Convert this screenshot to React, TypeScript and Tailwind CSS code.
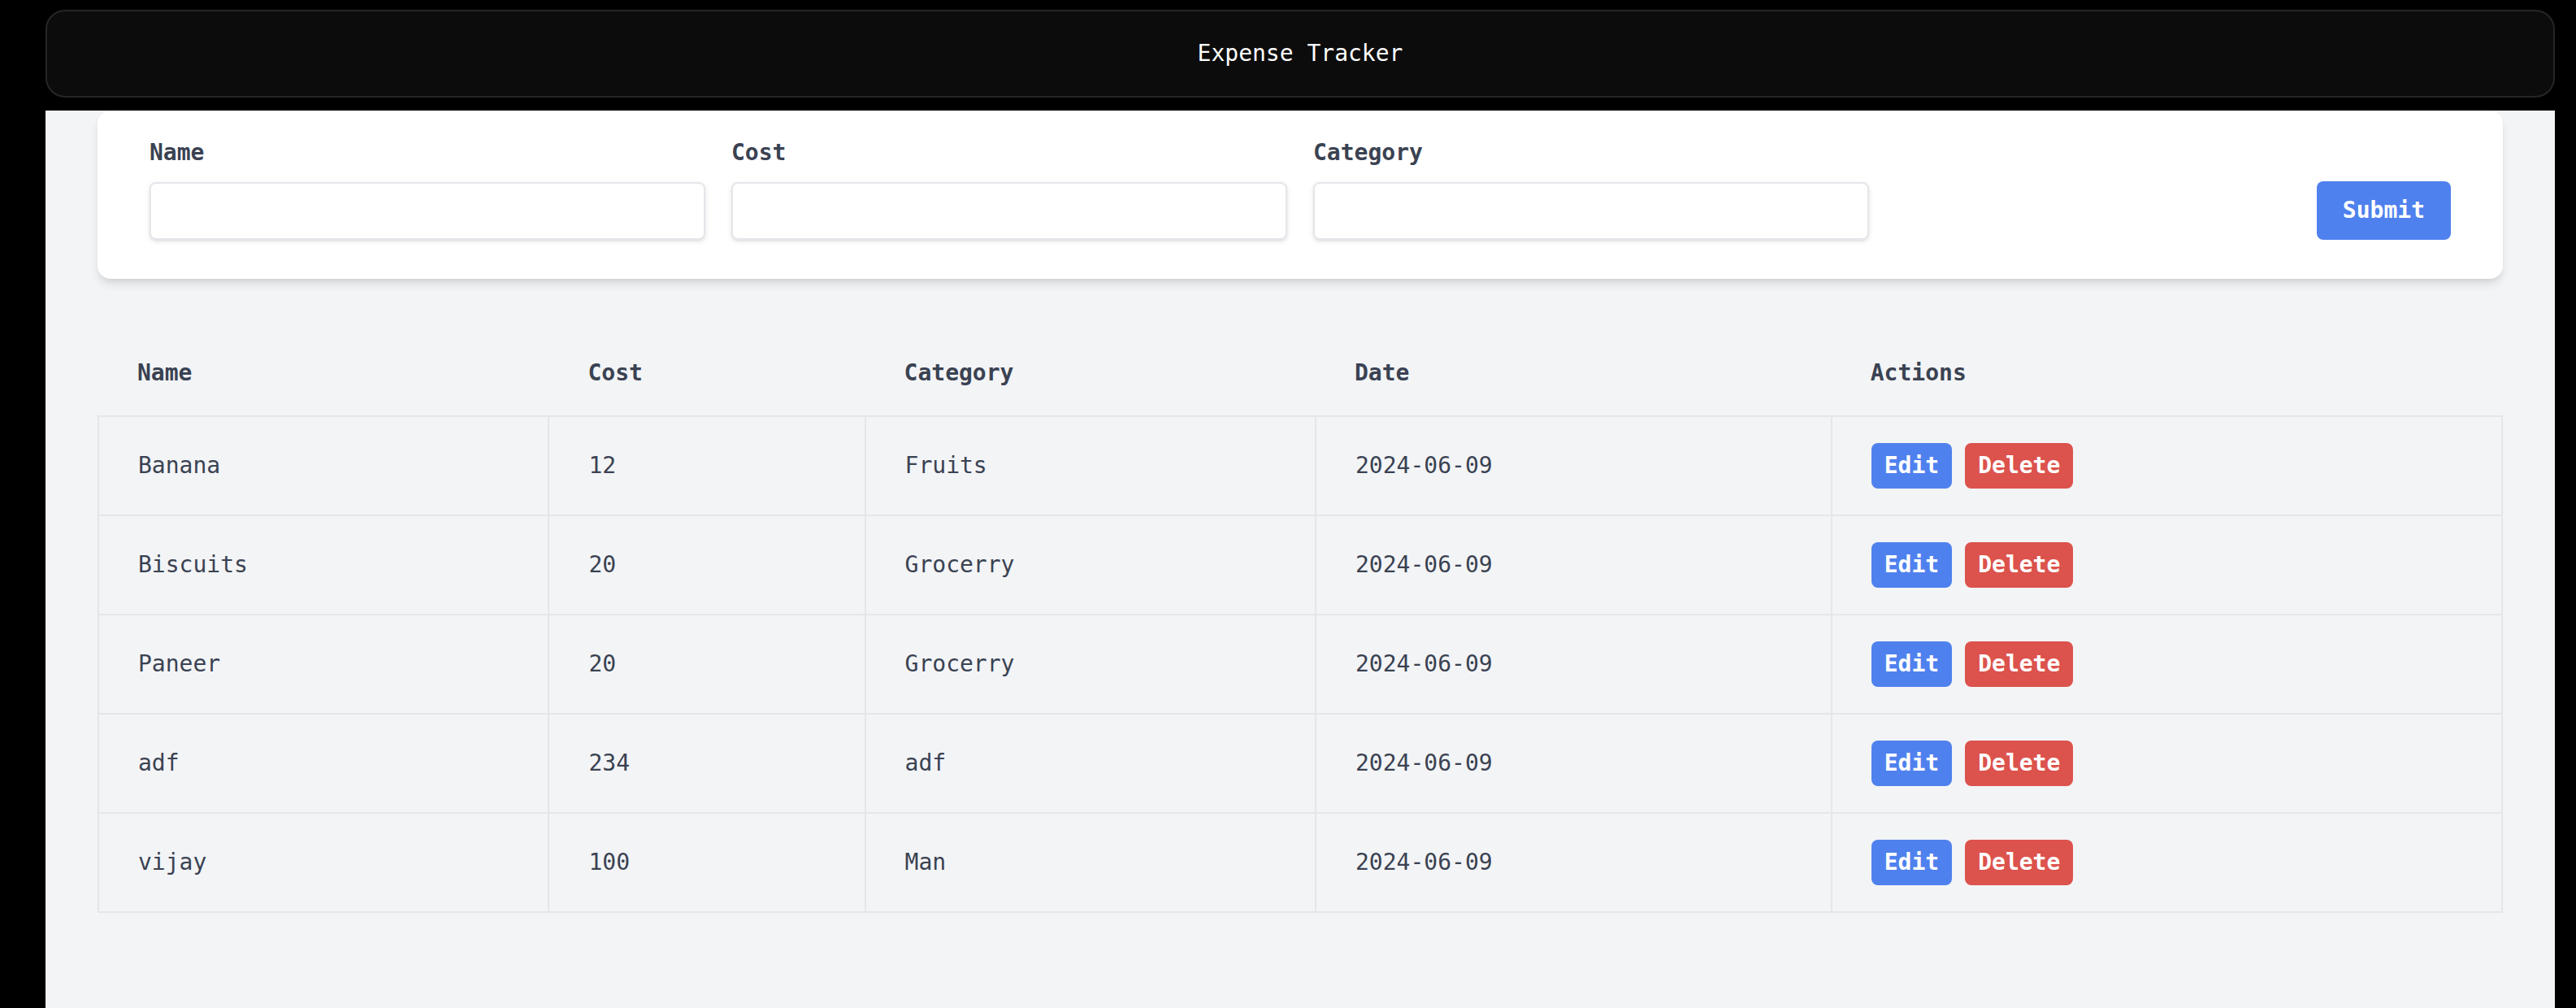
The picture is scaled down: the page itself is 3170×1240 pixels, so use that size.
import React, { useState } from "react";

type Expense = {
  name: string;
  cost: number;
  category: string;
  date: string;
};

const initialExpenses: Expense[] = [
  { name: "Banana", cost: 12, category: "Fruits", date: "2024-06-09" },
  { name: "Biscuits", cost: 20, category: "Grocerry", date: "2024-06-09" },
  { name: "Paneer", cost: 20, category: "Grocerry", date: "2024-06-09" },
  { name: "adf", cost: 234, category: "adf", date: "2024-06-09" },
  { name: "vijay", cost: 100, category: "Man", date: "2024-06-09" },
];

const columns = ["Name", "Cost", "Category", "Date", "Actions"];

function Field({ id, label }: { id: string; label: string }) {
  return (
    <div>
      <label htmlFor={id} className="mb-4 block font-bold">
        {label}
      </label>
      <input
        id={id}
        name={id}
        type="text"
        className="block h-[71px] w-full rounded-lg border-2 border-[#e6e6eb] bg-white px-6 shadow-[0_2px_6px_rgba(0,0,0,0.1),0_2px_4px_-2px_rgba(0,0,0,0.1)] outline-none"
      />
    </div>
  );
}

function ExpenseForm({ onAdd }: { onAdd: (expense: Expense) => void }) {
  const submit = (event: React.FormEvent<HTMLFormElement>) => {
    event.preventDefault();
    const data = new FormData(event.currentTarget);
    onAdd({
      name: String(data.get("name")),
      cost: Number(data.get("cost")),
      category: String(data.get("category")),
      date: new Date().toISOString().slice(0, 10),
    });
    event.currentTarget.reset();
  };

  return (
    <form
      onSubmit={submit}
      className="grid grid-cols-4 items-end gap-8 rounded-2xl bg-white px-16 pt-8 pb-12 shadow-[0_8px_12px_-2px_rgba(0,0,0,0.1),0_4px_8px_-4px_rgba(0,0,0,0.1)]"
    >
      <Field id="name" label="Name" />
      <Field id="cost" label="Cost" />
      <Field id="category" label="Category" />
      <button
        type="submit"
        className="justify-self-end rounded-lg bg-[#4f81ee] px-8 py-4 font-bold text-white"
      >
        Submit
      </button>
    </form>
  );
}

function ExpenseTable({
  expenses,
  onDelete,
}: {
  expenses: Expense[];
  onDelete: (index: number) => void;
}) {
  const cell = "border-2 border-[#e5e6e9] px-12 py-8";
  return (
    <table className="mt-16 w-full border-collapse text-left">
      <thead>
        <tr>
          {columns.map((column) => (
            <th key={column} scope="col" className="px-12 py-8 font-bold">
              {column}
            </th>
          ))}
        </tr>
      </thead>
      <tbody>
        {expenses.map((expense, index) => (
          <tr key={index}>
            <td className={cell}>{expense.name}</td>
            <td className={cell}>{expense.cost}</td>
            <td className={cell}>{expense.category}</td>
            <td className={cell}>{expense.date}</td>
            <td className={cell}>
              <div className="flex gap-4">
                <button
                  type="button"
                  className="rounded-lg bg-[#4f81ee] px-4 py-2 font-bold text-white"
                >
                  Edit
                </button>
                <button
                  type="button"
                  onClick={() => onDelete(index)}
                  className="rounded-lg bg-[#dc524c] px-4 py-2 font-bold text-white"
                >
                  Delete
                </button>
              </div>
            </td>
          </tr>
        ))}
      </tbody>
    </table>
  );
}

export default function App() {
  const [expenses, setExpenses] = useState(initialExpenses);

  return (
    <div className="flex min-h-screen flex-col bg-black pt-3 pr-[26px] pl-14 font-['DejaVu_Sans_Mono',monospace] text-[28px] leading-10 text-[#3a4252]">
      <header className="flex h-[108px] items-center justify-center rounded-3xl border-2 border-[#262626] bg-[#0c0c0c] text-white">
        <h1>Expense Tracker</h1>
      </header>
      <main className="mt-4 flex-1 bg-[#f3f4f6] px-16 pb-16">
        <ExpenseForm onAdd={(expense) => setExpenses([...expenses, expense])} />
        <ExpenseTable
          expenses={expenses}
          onDelete={(index) => setExpenses(expenses.filter((_, i) => i !== index))}
        />
      </main>
    </div>
  );
}
